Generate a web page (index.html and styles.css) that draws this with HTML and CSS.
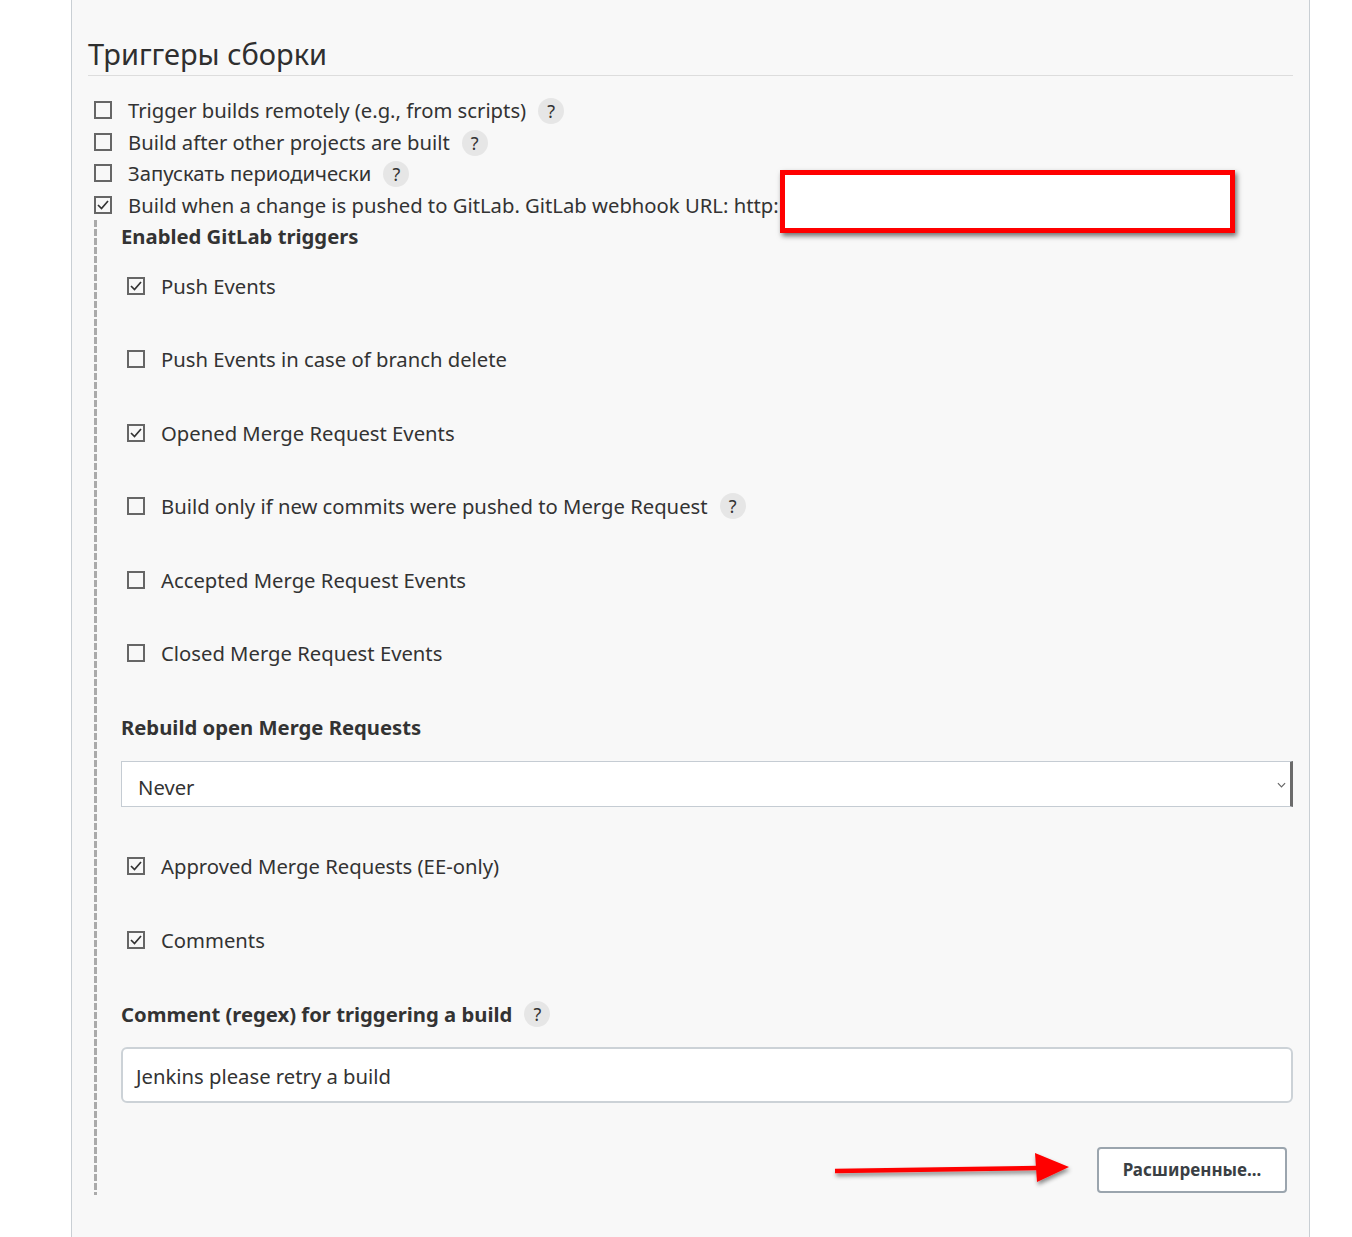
FILE: index.html
```html
<!DOCTYPE html>
<html lang="ru">
<head>
<meta charset="utf-8">
<title>Триггеры сборки</title>
<link rel="stylesheet" href="styles.css">
</head>
<body>
<div class="panel">
  <h2 class="section-title">Триггеры сборки</h2>

  <div class="top-row">
    <span class="cb"></span>
    <span class="label">Trigger builds remotely (e.g., from scripts)</span>
    <span class="help">?</span>
  </div>
  <div class="top-row">
    <span class="cb"></span>
    <span class="label">Build after other projects are built</span>
    <span class="help">?</span>
  </div>
  <div class="top-row">
    <span class="cb"></span>
    <span class="label">Запускать периодически</span>
    <span class="help">?</span>
  </div>
  <div class="top-row">
    <span class="cb"><svg viewBox="0 0 14 14" class="tick"><polyline points="2,7 5.5,10.5 12,3"/></svg></span>
    <span class="label">Build when a change is pushed to GitLab. GitLab webhook URL: http:</span>
  </div>

  <div class="nested">
    <div class="bold-label first">Enabled GitLab triggers</div>

    <div class="sub-row first-sub">
      <span class="cb"><svg viewBox="0 0 14 14" class="tick"><polyline points="2,7 5.5,10.5 12,3"/></svg></span>
      <span class="label">Push Events</span>
    </div>
    <div class="sub-row">
      <span class="cb"></span>
      <span class="label">Push Events in case of branch delete</span>
    </div>
    <div class="sub-row">
      <span class="cb"><svg viewBox="0 0 14 14" class="tick"><polyline points="2,7 5.5,10.5 12,3"/></svg></span>
      <span class="label">Opened Merge Request Events</span>
    </div>
    <div class="sub-row">
      <span class="cb"></span>
      <span class="label">Build only if new commits were pushed to Merge Request</span>
      <span class="help">?</span>
    </div>
    <div class="sub-row">
      <span class="cb"></span>
      <span class="label">Accepted Merge Request Events</span>
    </div>
    <div class="sub-row">
      <span class="cb"></span>
      <span class="label">Closed Merge Request Events</span>
    </div>

    <div class="bold-label spaced">Rebuild open Merge Requests</div>
    <div class="select">
      <span class="select-value">Never</span>
      <svg class="chev" viewBox="0 0 10 6"><polyline points="1,1 5,5 9,1"/></svg>
    </div>

    <div class="sub-row after-field">
      <span class="cb"><svg viewBox="0 0 14 14" class="tick"><polyline points="2,7 5.5,10.5 12,3"/></svg></span>
      <span class="label">Approved Merge Requests (EE-only)</span>
    </div>
    <div class="sub-row">
      <span class="cb"><svg viewBox="0 0 14 14" class="tick"><polyline points="2,7 5.5,10.5 12,3"/></svg></span>
      <span class="label">Comments</span>
    </div>

    <div class="bold-label spaced">Comment (regex) for triggering a build <span class="help">?</span></div>
    <div class="text-input">Jenkins please retry a build</div>

    <div class="actions">
      <button class="btn">Расширенные...</button>
    </div>
  </div>

  <div class="redact-box"></div>
  <svg class="annot-arrow" viewBox="0 0 250 40" width="250" height="40">
    <defs>
      <filter id="sh" x="-10%" y="-50%" width="120%" height="200%">
        <feDropShadow dx="1" dy="3" stdDeviation="2" flood-color="#000" flood-opacity="0.45"/>
      </filter>
    </defs>
    <g filter="url(#sh)">
      <line x1="6" y1="22" x2="208" y2="19" stroke="#f00" stroke-width="4.5"/>
      <polygon points="206,4 240,18 208,33" fill="#f00"/>
    </g>
  </svg>
</div>
</body>
</html>
```

FILE: styles.css
```css
* { box-sizing: border-box; }

html, body {
  margin: 0;
  padding: 0;
  background: #ffffff;
}

body {
  font-family: "Noto Sans", "Open Sans", sans-serif;
  font-size: 20.25px;
  color: #333333;
}

.panel {
  position: relative;
  margin-left: 71px;
  width: 1239px;
  min-height: 1237px;
  background: #f8f8f8;
  border-left: 1px solid #c9cfd4;
  border-right: 1px solid #c9cfd4;
  padding: 36px 16px 0 16px;
}

.section-title {
  margin: 0 0 19px 0;
  font-size: 29px;
  font-weight: 400;
  line-height: 36px;
  padding-bottom: 3px;
  border-bottom: 1px solid #dddddd;
  color: #2f2f2f;
}

.top-row {
  display: flex;
  align-items: center;
  height: 31.7px;
  padding-left: 6px;
  white-space: nowrap;
}

.top-row .label {
  margin-top: -2px;
}

.top-row .cb {
  margin-right: 16px;
  margin-top: -2px;
}

.cb {
  flex: none;
  display: inline-flex;
  align-items: center;
  justify-content: center;
  width: 18px;
  height: 18px;
  border: 2px solid #666;
  background: transparent;
}

.tick {
  width: 14px;
  height: 14px;
  fill: none;
  stroke: #333;
  stroke-width: 1.7;
}

.label {
  line-height: 32px;
}

.help {
  flex: none;
  display: inline-flex;
  align-items: center;
  justify-content: center;
  width: 26px;
  height: 26px;
  border-radius: 50%;
  background: #e6e6e6;
  color: #333;
  font-size: 18px;
  font-weight: 400;
  margin-left: 12px;
  vertical-align: middle;
}

.nested {
  margin-top: -2px;
  margin-left: 6px;
  padding: 0 0 2px 27px;
  background-image: repeating-linear-gradient(to bottom, #aaaaaa 0, #aaaaaa 7px, transparent 7px, transparent 9px);
  background-size: 3px 100%;
  background-repeat: no-repeat;
  background-position: left top;
}

.bold-label {
  font-weight: 700;
  line-height: 32px;
  height: 32px;
  display: flex;
  align-items: center;
  white-space: nowrap;
}

.bold-label.spaced {
  margin-top: 42px;
}

.sub-row {
  display: flex;
  align-items: center;
  height: 32px;
  margin-top: 41.5px;
  padding-left: 6px;
  white-space: nowrap;
}

.sub-row.first-sub {
  margin-top: 18px;
}

.sub-row.after-field {
  margin-top: 43px;
}

.sub-row .cb {
  margin-right: 16px;
}

.select {
  margin-top: 18px;
  height: 46px;
  background: #ffffff;
  border: 1px solid #c5ccd3;
  border-right: 3px solid #6b6b6b;
  display: flex;
  align-items: center;
  justify-content: space-between;
  padding: 0 4px 0 16px;
}

.select-value {
  padding-top: 5px;
}

.chev {
  width: 9px;
  height: 6px;
  fill: none;
  stroke: #666;
  stroke-width: 1.3;
  margin-top: 2px;
}

.text-input {
  margin-top: 17px;
  height: 56px;
  background: #ffffff;
  border: 2px solid #ccd2d7;
  border-radius: 6px;
  padding: 2px 13px 0;
  display: flex;
  align-items: center;
}

.actions {
  display: flex;
  justify-content: flex-end;
  margin-top: 44px;
  padding-right: 6px;
}

.btn {
  width: 190px;
  height: 46px;
  background: #ffffff;
  border: 2px solid #9ba5ae;
  border-radius: 4px;
  font-family: "Noto Sans", "Open Sans", sans-serif;
  font-size: 17px;
  font-weight: 700;
  color: #3a3f44;
  padding: 0;
}

/* annotation overlays */
.redact-box {
  position: absolute;
  left: 708px;
  top: 170px;
  width: 455px;
  height: 63px;
  background: #ffffff;
  border: 5px solid #ff0000;
  box-shadow: 2px 3px 5px rgba(0, 0, 0, 0.55);
}

.annot-arrow {
  position: absolute;
  left: 757px;
  top: 1149px;
}
```
